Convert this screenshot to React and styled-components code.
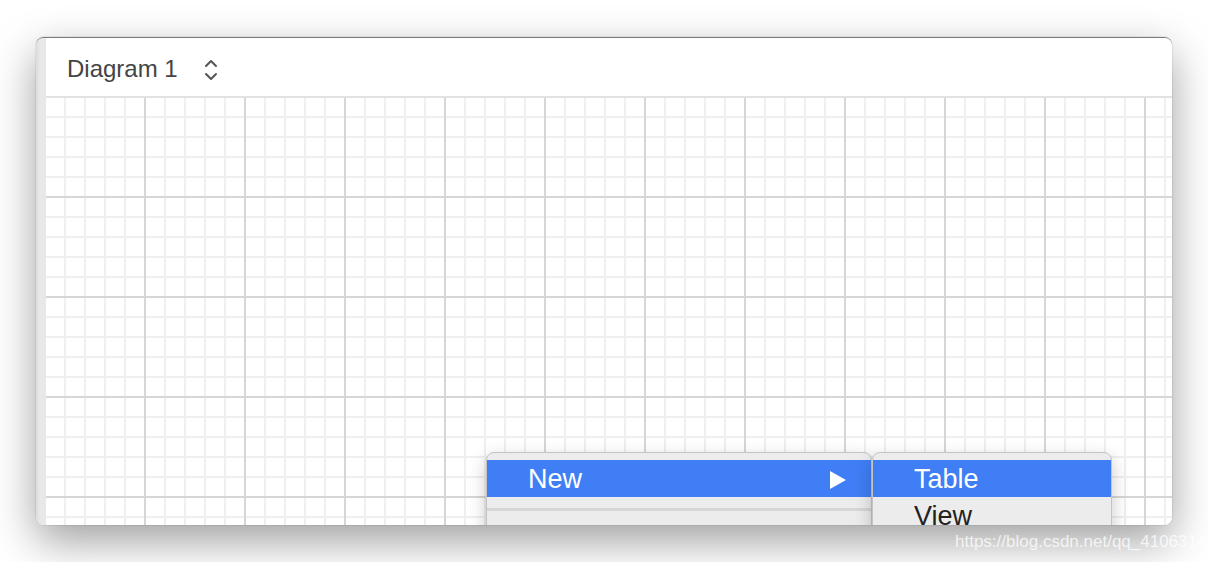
import { Fragment } from "react";
import styled, { createGlobalStyle } from "styled-components";

const GlobalStyle = createGlobalStyle`
  html, body {
    margin: 0;
    background: #ffffff;
    font-family: "Liberation Sans", Arial, sans-serif;
  }
`;

const Page = styled.div`
  position: relative;
  box-sizing: border-box;
  height: 562px;
  padding: 37px 36px 0;
  overflow: hidden;
`;

const Window = styled.div`
  display: flex;
  width: 1136px;
  height: 488px;
  box-sizing: border-box;
  border-top: 1px solid #7a7a7a;
  border-radius: 8px;
  overflow: hidden;
  background: #ffffff;
  box-shadow: 0 16px 44px rgba(0, 0, 0, 0.38), 0 0 0 1px rgba(0, 0, 0, 0.06);
`;

const Strip = styled.div`
  width: 10px;
  flex-shrink: 0;
  background: linear-gradient(to right, #dcdcdc, #e8e8e8 40%);
`;

const Body = styled.div`
  flex: 1;
  display: flex;
  flex-direction: column;
  min-width: 0;
`;

const Toolbar = styled.div`
  height: 60px;
  flex-shrink: 0;
  display: flex;
  align-items: center;
  padding: 4px 0 0 21px;
  box-sizing: border-box;
  border-bottom: 2px solid #e2e2e2;
  background: #ffffff;
`;

const Title = styled.span`
  font-size: 24px;
  color: #444444;
`;

const Stepper = styled.svg`
  margin-left: 26px;
  margin-top: 1px;
`;

const Canvas = styled.div`
  position: relative;
  flex: 1;
  background-color: #ffffff;
  background-image:
    linear-gradient(to right, #d6d6d6 2px, transparent 2px),
    linear-gradient(to bottom, #d6d6d6 2px, transparent 2px),
    linear-gradient(to right, #efefef 2px, transparent 2px),
    linear-gradient(to bottom, #efefef 2px, transparent 2px);
  background-size: 100px 100px, 100px 100px, 20px 20px, 20px 20px;
  background-position: -2px -2px;
`;

const Menu = styled.div`
  position: absolute;
  top: 354px;
  left: ${props => props.left}px;
  width: ${props => props.width}px;
  height: 200px;
  box-sizing: border-box;
  padding-top: 7px;
  background: #ececec;
  border: 1px solid #c4c4c4;
  border-radius: 8px 8px 0 0;
  box-shadow: 0 6px 18px rgba(0, 0, 0, 0.22);
`;

const Item = styled.div`
  display: flex;
  align-items: center;
  height: 37px;
  padding: 2px 24px 0 41px;
  box-sizing: border-box;
  font-size: 27px;
  color: ${props => (props.active ? "#ffffff" : "#222222")};
  background: ${props => (props.active ? "#3f7ef5" : "transparent")};
`;

const Arrow = styled.svg`
  margin-left: auto;
`;

const Separator = styled.div`
  height: 3px;
  margin: 11px 0;
  background: #d6d6d6;
`;

const Watermark = styled.div`
  position: absolute;
  left: 955px;
  top: 532px;
  font-size: 17px;
  color: rgba(255, 255, 255, 0.75);
  white-space: nowrap;
`;

const App = () => (
  <Fragment>
    <GlobalStyle />
    <Page>
      <Window>
        <Strip />
        <Body>
          <Toolbar>
            <Title>Diagram 1</Title>
            <Stepper width="14" height="24" viewBox="0 0 14 24">
              <path
                d="M2 8 L7 3 L12 8 M2 16 L7 21 L12 16"
                fill="none"
                stroke="#555555"
                strokeWidth="2"
                strokeLinecap="round"
                strokeLinejoin="round"
              />
            </Stepper>
          </Toolbar>
          <Canvas>
            <Menu left={440} width={386}>
              <Item active>
                New
                <Arrow width="18" height="20" viewBox="0 0 18 20">
                  <path d="M1 1 L17 10 L1 19 Z" fill="#ffffff" />
                </Arrow>
              </Item>
              <Separator />
            </Menu>
            <Menu left={826} width={240}>
              <Item active>Table</Item>
              <Item>View</Item>
            </Menu>
          </Canvas>
        </Body>
      </Window>
      <Watermark>https://blog.csdn.net/qq_41063141</Watermark>
    </Page>
  </Fragment>
);

export default App;
